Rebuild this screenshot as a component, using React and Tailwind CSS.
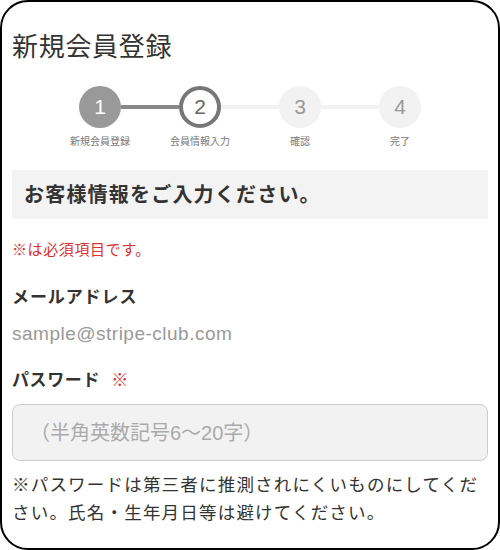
import React from 'react'

const FONT = { fontFamily: '"Liberation Sans", "Noto Sans CJK JP", sans-serif' }

const steps = [
  { n: 1, label: '新規会員登録', state: 'done' },
  { n: 2, label: '会員情報入力', state: 'current' },
  { n: 3, label: '確認', state: 'todo' },
  { n: 4, label: '完了', state: 'todo' }
]

function Circle({ n, state }) {
  if (state === 'done')
    return (
      <div className="h-[42px] w-[42px] shrink-0 rounded-full bg-[#999999] grid place-items-center text-[21px] text-white">
        {n}
      </div>
    )
  if (state === 'current')
    return (
      <div className="h-[42px] w-[42px] shrink-0 rounded-full border-[4px] border-[#777777] bg-white grid place-items-center text-[21px] text-[#666666]">
        {n}
      </div>
    )
  return (
    <div className="h-[42px] w-[42px] shrink-0 rounded-full bg-[#f2f2f2] grid place-items-center text-[21px] text-[#999999]">
      {n}
    </div>
  )
}

function Stepper() {
  return (
    <div className="mt-[21px]">
      <div className="flex items-center w-[342px] mx-auto">
        <Circle {...steps[0]} />
        <div className="flex-1 h-[4px] bg-[#888888]" />
        <Circle {...steps[1]} />
        <div className="flex-1 h-[4px] bg-[#f2f2f2]" />
        <Circle {...steps[2]} />
        <div className="flex-1 h-[4px] bg-[#f2f2f2]" />
        <Circle {...steps[3]} />
      </div>
      <div className="grid grid-cols-4 w-[400px] mx-auto mt-[7px]">
        {steps.map((s) => (
          <div key={s.n} className="text-center text-[10px] leading-[14px] text-[#777777]">
            {s.label}
          </div>
        ))}
      </div>
    </div>
  )
}

export default function App() {
  return (
    <div style={FONT} className="h-[550px] w-[500px] bg-white">
      <div className="h-full w-full border-2 border-black rounded-[28px] px-[10px] pt-[27px] text-[#333333]">
        <h1 className="text-[26px] leading-[36px] tracking-[0.7px] font-normal">新規会員登録</h1>

        <Stepper />

        <div className="mt-[21px] h-[49px] bg-[#f3f3f3] flex items-center px-[12px]">
          <p className="text-[20px] font-bold tracking-[1.2px]">お客様情報をご入力ください。</p>
        </div>

        <p className="mt-[21px] text-[15px] leading-[20px] tracking-[0.6px] text-[#e03030]">※は必須項目です。</p>

        <p className="mt-[26px] text-[17px] leading-[24px] font-bold tracking-[0.9px]">メールアドレス</p>
        <p className="mt-[12px] text-[19px] leading-[24px] tracking-[0.5px] text-[#999999]">sample@stripe-club.com</p>

        <p className="mt-[23px] text-[17px] leading-[24px] font-bold tracking-[0.6px]">
          パスワード <span className="text-[#e03030] font-normal ml-[6px]">※</span>
        </p>

        <div className="mt-[11px] h-[57px] rounded-[8px] border border-[#cccccc] bg-[#f2f2f2] flex items-center px-[17px]">
          <span className="text-[20px] text-[#aaaaaa]">（半角英数記号6〜20字）</span>
        </div>

        <p className="mt-[10px] text-[17.5px] leading-[28px] tracking-[1.2px]">
          ※パスワードは第三者に推測されにくいものにしてください。氏名・生年月日等は避けてください。
        </p>
      </div>
    </div>
  )
}
